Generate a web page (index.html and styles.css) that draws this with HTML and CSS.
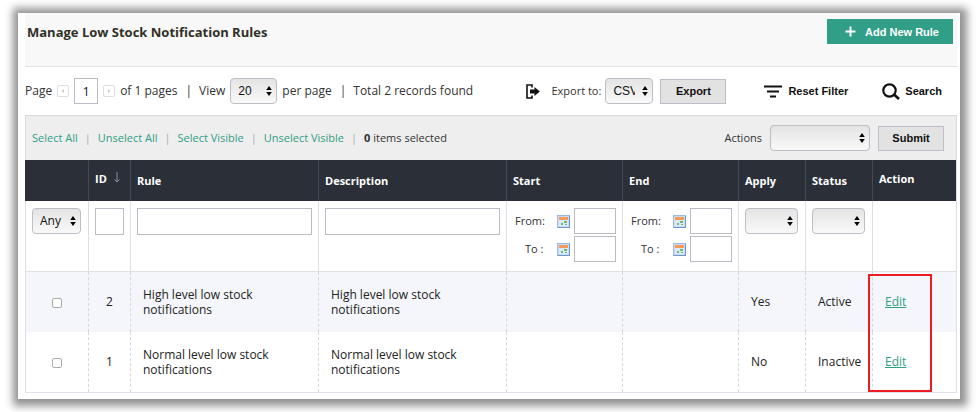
FILE: index.html
```html
<!DOCTYPE html>
<html lang="en">
<head>
<meta charset="utf-8">
<title>Manage Low Stock Notification Rules</title>
<link rel="stylesheet" href="styles.css">
</head>
<body>
<svg class="sprite" aria-hidden="true">
  <symbol id="updown" viewBox="0 0 6 10"><path d="M3 0L5.8 4H.2zM3 10L.2 6h5.6z"/></symbol>
  <symbol id="calendar" viewBox="0 0 13 13">
    <rect x=".5" y=".5" width="12" height="12" fill="#c9dcf3" stroke="#9bb8de"/>
    <path d="M12.5 1v11.5H1" fill="none" stroke="#6f96cb"/>
    <rect x="2" y="4" width="9" height="7" fill="#dce9f8"/>
    <rect x="2" y="2" width="9" height="3" fill="#f79a58"/>
    <rect x="4" y="8" width="2" height="2" fill="#70b96b"/>
    <rect x="7" y="6" width="3" height="2" fill="#70b96b"/>
    <rect x="8" y="9" width="2" height="1" fill="#70b96b"/>
  </symbol>
</svg>
<main class="panel">
  <header class="title-bar">
    <h1>Manage Low Stock Notification Rules</h1>
    <button class="add" type="button"><svg width="11" height="11" viewBox="0 0 11 11"><path d="M5.5 .5v10M.5 5.5h10" stroke="#fff" stroke-width="2"/></svg>Add New Rule</button>
  </header>

  <div class="toolbar">
    <div class="pager">
      <label for="page">Page</label>
      <button class="step" type="button" aria-label="Previous page"><svg width="10" height="10" viewBox="0 0 10 10"><path d="M6 3v4L3.500 5z" fill="#ccc"/></svg></button>
      <input class="page-no" id="page" type="text" value="1">
      <button class="step next" type="button" aria-label="Next page"><svg width="10" height="10" viewBox="0 0 10 10"><path d="M4 3v4L6.500 5z" fill="#ccc"/></svg></button>
      <span>of 1 pages</span>
      <span class="bar">|</span>
      <label for="view">View</label>
      <span class="select view"><select id="view"><option>20</option></select><svg><use href="#updown"/></svg></span>
      <span>per page</span>
      <span class="bar">|</span>
      <span>Total 2 records found</span>
    </div>
    <div class="export">
      <svg width="14" height="15" viewBox="0 0 14 15"><path d="M6 3.500V1H1v13h5v-2.500" fill="none" stroke="#111" stroke-width="1.600"/><path d="M4 5.500h4.500V3L13.800 7.500 8.500 12V9.500H4z" fill="#111"/></svg>
      <label for="export">Export to:</label>
      <span class="select format"><select id="export"><option>CSV</option></select><svg><use href="#updown"/></svg></span>
      <button class="button" type="button">Export</button>
    </div>
    <button class="plain reset" type="button"><svg width="18" height="13" viewBox="0 0 18 13"><path d="M0 1.500h18M3 6.500h12M6 11.500h6" stroke="#111" stroke-width="2"/></svg>Reset Filter</button>
    <button class="plain search" type="button"><svg width="18" height="17" viewBox="0 0 18 17"><circle cx="7.500" cy="7.500" r="6.200" fill="none" stroke="#111" stroke-width="2.200"/><path d="M12 11.500l5 4.500" stroke="#111" stroke-width="2.600"/></svg>Search</button>
  </div>

  <div class="mass">
    <div class="mass-links">
      <a href="#">Select All</a><i>|</i><a href="#">Unselect All</a><i>|</i><a href="#">Select Visible</a><i>|</i><a href="#">Unselect Visible</a><i>|</i><span><b>0</b> items selected</span>
    </div>
    <div class="mass-actions">
      <label for="actions">Actions</label>
      <span class="select actions"><select id="actions"><option></option></select><svg><use href="#updown"/></svg></span>
      <button class="button" type="button">Submit</button>
    </div>
  </div>

  <table>
    <colgroup><col class="c-check"><col class="c-id"><col><col><col class="c-date"><col class="c-date"><col class="c-flag"><col class="c-flag"><col class="c-action"></colgroup>
    <thead>
      <tr><th></th><th class="sorted">ID<svg width="6" height="11" viewBox="0 0 6 11"><path d="M3 0v10M.5 7.500L3 10l2.500-2.500" fill="none" stroke="#8b8f9a"/></svg></th><th>Rule</th><th>Description</th><th>Start</th><th>End</th><th>Apply</th><th>Status</th><th class="sorted">Action</th></tr>
      <tr class="filters">
        <td><span class="select any"><select aria-label="Selection"><option>Any</option></select><svg><use href="#updown"/></svg></span></td>
        <td><input type="text" aria-label="ID"></td>
        <td><input type="text" aria-label="Rule"></td>
        <td><input type="text" aria-label="Description"></td>
        <td><div class="range">
          <label for="start-from">From:</label><svg width="13" height="13"><use href="#calendar"/></svg><input id="start-from" type="text">
          <label for="start-to">To :</label><svg width="13" height="13"><use href="#calendar"/></svg><input id="start-to" type="text">
        </div></td>
        <td><div class="range">
          <label for="end-from">From:</label><svg width="13" height="13"><use href="#calendar"/></svg><input id="end-from" type="text">
          <label for="end-to">To :</label><svg width="13" height="13"><use href="#calendar"/></svg><input id="end-to" type="text">
        </div></td>
        <td><span class="select flag"><select aria-label="Apply"><option></option></select><svg><use href="#updown"/></svg></span></td>
        <td><span class="select flag"><select aria-label="Status"><option></option></select><svg><use href="#updown"/></svg></span></td>
        <td></td>
      </tr>
    </thead>
    <tbody>
      <tr><td class="center"><input type="checkbox" aria-label="Select rule 2"></td><td class="center">2</td><td><div class="text">High level low stock notifications</div></td><td><div class="text">High level low stock notifications</div></td><td></td><td></td><td>Yes</td><td>Active</td><td class="edit"><a href="#">Edit</a><span class="highlight"></span></td></tr>
      <tr><td class="center"><input type="checkbox" aria-label="Select rule 1"></td><td class="center">1</td><td><div class="text">Normal level low stock notifications</div></td><td><div class="text">Normal level low stock notifications</div></td><td></td><td></td><td>No</td><td>Inactive</td><td><a href="#">Edit</a></td></tr>
    </tbody>
  </table>
</main>
</body>
</html>
```
FILE: styles.css
```css
* { box-sizing: border-box; }

body {
  margin: 0;
  padding: 13px 20px 14px 18px;
  background: #fff;
  color: #333;
  font: 12px/16px "Open Sans", sans-serif;
}

.sprite { position: absolute; width: 0; height: 0; }

svg { flex: none; }

button, input, select { font: inherit; color: #111; margin: 0; }

a { color: #2f9e85; }

.panel {
  padding: 0 3px 6px 7px;
  background: #fff;
  box-shadow: 1px 1px 8px 6px #929292;
}

.title-bar {
  display: flex;
  justify-content: space-between;
  align-items: flex-start;
  height: 54px;
  padding: 6px 4px 0 2px;
  background: #f8f8f8;
  border-bottom: 1px solid #dfe1ea;
}

h1 {
  margin: 3px 0 0;
  color: #303027;
  font-size: 13px;
  font-weight: 700;
  line-height: 20px;
}

.add, .button, .plain {
  display: flex;
  align-items: center;
  justify-content: center;
  font: bold 11px/14px "Liberation Sans", Arial, sans-serif;
}

.add {
  gap: 9px;
  width: 126px;
  height: 25px;
  padding: 0 0 0 4px;
  border: 0;
  background: #319e87;
  color: #fff;
}

.toolbar {
  display: flex;
  align-items: center;
  height: 48px;
  padding-right: 15px;
}

.pager, .export, .mass-actions { display: flex; align-items: center; }

.pager { flex: 1; gap: 5px; }

.bar { margin: 0 2px 0 3px; }

.step {
  display: flex;
  width: 12px;
  height: 12px;
  padding: 0;
  border: 1px solid #ddd;
  border-radius: 2px;
  background: #fff;
}

input[type="text"] {
  display: block;
  width: 100%;
  min-width: 0;
  height: 27px;
  padding: 0;
  border: 1px solid #bbbbc6;
  background: #fff;
}

.pager .page-no { width: 24px; height: 26px; text-align: center; }

.select { position: relative; display: block; flex: none; height: 26px; }

.select select {
  appearance: none;
  display: block;
  width: 100%;
  height: 100%;
  padding: 0 17px 0 7px;
  border: 1px solid #bdbdc6;
  border-radius: 4px;
  background: linear-gradient(#e4e4e4, #f9f9f9);
}

.select svg {
  position: absolute;
  top: 8px;
  right: 5px;
  width: 6px;
  height: 10px;
  pointer-events: none;
}

.view { width: 47px; }
.format { width: 48px; }
.actions { width: 100px; }
.any { width: 49px; }
.flag { width: 53px; }

.view select, .format select { font-family: "Liberation Sans", Arial, sans-serif; }

.export { gap: 7px; font-size: 11px; }
.export label { margin: 0 -3px 0 4px; }
.export select { font-size: 12px; }

.button {
  width: 66px;
  height: 25px;
  padding: 0;
  border: 1px solid #bdbdc8;
  background: #e2e2e2;
}

.plain { padding: 0; border: 0; background: none; }
.reset { gap: 6px; margin-left: 38px; }
.search { gap: 5px; margin-left: 34px; }

.mass {
  display: flex;
  align-items: center;
  justify-content: space-between;
  height: 45px;
  padding: 0 12px 0 6px;
  border: 1px solid #dadada;
  border-bottom: 0;
  background: #eee;
  font-size: 11px;
}

.mass-links { display: flex; }
.mass-links a { text-decoration: none; }
.mass-links i { margin: 0 7px; color: #aaa; font-style: normal; }
.mass-actions { gap: 8px; }

table {
  width: 100%;
  table-layout: fixed;
  border-collapse: separate;
  border-spacing: 0;
  border: solid #dfe1ea;
  border-width: 0 1px 1px 0;
}

.c-check { width: 63px; }
.c-id { width: 42px; }
.c-date { width: 116px; }
.c-flag { width: 67px; }
.c-action { width: 84px; }

th {
  height: 41px;
  padding: 0 6px;
  border-left: 1px solid #454a54;
  background: #2b2f38;
  color: #fff;
  font-size: 11px;
  font-weight: 700;
  text-align: left;
}

th:first-child { border-left-color: #2b2f38; }
.sorted { padding-bottom: 4px; }
.sorted svg { margin-left: 7px; }

.filters td {
  height: 71px;
  padding: 7px 6px 0;
  border-left: 1px solid #dfdfe3;
  border-bottom: 1px solid #dfe1e6;
  vertical-align: top;
}

.range {
  display: grid;
  grid-template-columns: 1fr 13px 42px;
  column-gap: 4px;
  align-items: center;
  row-gap: 2px;
  font-size: 11px;
}

.range label { padding-left: 2px; }
.range label:nth-of-type(2) { padding-left: 12px; }
.range input[type="text"] { height: 26px; }

tbody td {
  height: 60px;
  padding: 0 6px 0 12px;
  border-left: 1px dashed #d5d7dd;
  color: #222;
}

tbody td:first-child { border-left: 1px solid #dfe1ea; }
tbody tr:first-child td { background: #f4f6fb; }
tbody .center { padding: 0; text-align: center; }

.text { max-width: 140px; line-height: 15px; }

input[type="checkbox"] {
  appearance: none;
  width: 10px;
  height: 10px;
  border: 1px solid #aaa;
  border-radius: 2px;
  background: #fff;
  vertical-align: middle;
}

.edit { position: relative; }

.highlight {
  position: absolute;
  top: 2px;
  left: -5px;
  width: 64px;
  height: 118px;
  border: 2px solid #ed1c24;
  pointer-events: none;
}
```
